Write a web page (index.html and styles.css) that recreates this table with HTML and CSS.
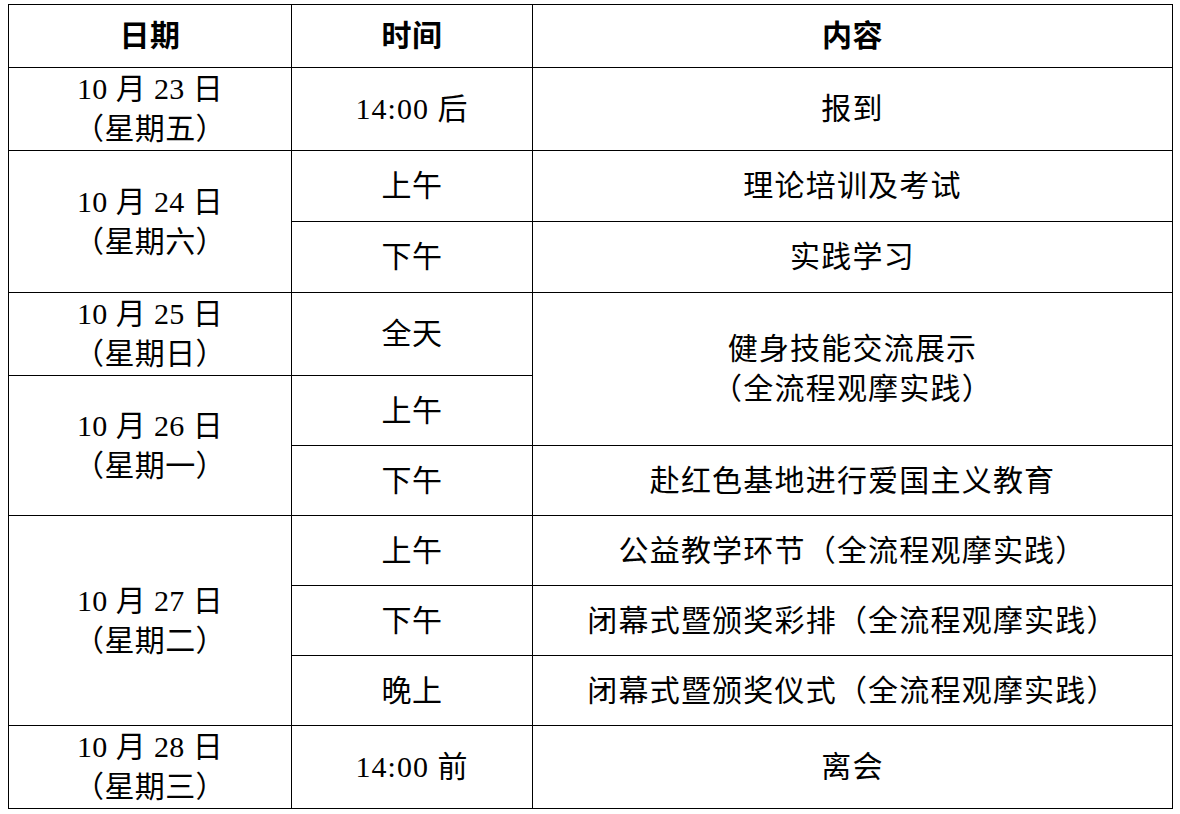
FILE: index.html
```html
<!DOCTYPE html>
<html lang="zh">
<head>
<meta charset="utf-8">
<link rel="stylesheet" href="styles.css">
</head>
<body>
<table class="schedule">
  <colgroup>
    <col class="c-date">
    <col class="c-time">
    <col class="c-content">
  </colgroup>
  <thead>
    <tr class="r-head">
      <th>日期</th>
      <th>时间</th>
      <th>内容</th>
    </tr>
  </thead>
  <tbody>
    <tr class="r-tall">
      <td>10 月 23 日<br><span class="wk">（星期五）</span></td>
      <td class="time">14:00 后</td>
      <td class="content">报到</td>
    </tr>
    <tr class="r-71">
      <td rowspan="2">10 月 24 日<br><span class="wk">（星期六）</span></td>
      <td>上午</td>
      <td class="content">理论培训及考试</td>
    </tr>
    <tr class="r-71">
      <td>下午</td>
      <td class="content">实践学习</td>
    </tr>
    <tr class="r-tall">
      <td>10 月 25 日<br><span class="wk">（星期日）</span></td>
      <td>全天</td>
      <td rowspan="2" class="content">健身技能交流展示<br><span class="wk">（全流程观摩实践）</span></td>
    </tr>
    <tr class="r-70">
      <td rowspan="2">10 月 26 日<br><span class="wk">（星期一）</span></td>
      <td>上午</td>
    </tr>
    <tr class="r-70">
      <td>下午</td>
      <td class="content">赴红色基地进行爱国主义教育</td>
    </tr>
    <tr class="r-70">
      <td rowspan="3">10 月 27 日<br><span class="wk">（星期二）</span></td>
      <td>上午</td>
      <td class="content">公益教学环节（全流程观摩实践）</td>
    </tr>
    <tr class="r-70">
      <td>下午</td>
      <td class="content">闭幕式暨颁奖彩排（全流程观摩实践）</td>
    </tr>
    <tr class="r-70">
      <td>晚上</td>
      <td class="content">闭幕式暨颁奖仪式（全流程观摩实践）</td>
    </tr>
    <tr class="r-tall">
      <td>10 月 28 日<br><span class="wk">（星期三）</span></td>
      <td class="time">14:00 前</td>
      <td class="content">离会</td>
    </tr>
  </tbody>
</table>
</body>
</html>
```

FILE: styles.css
```css
html, body {
  margin: 0;
  padding: 0;
  background: #ffffff;
}

body {
  padding: 4px 0 0 8px;
}

.schedule {
  border-collapse: collapse;
  table-layout: fixed;
  width: 1164px;
  font-family: "Liberation Serif", "Noto Sans CJK SC", serif;
  font-size: 30px;
  line-height: 40px;
  color: #000000;
  letter-spacing: 0.4px;
  text-spacing-trim: space-all;
}

.c-date { width: 283px; }
.c-time { width: 241px; }
.c-content { width: 640px; }

.schedule th,
.schedule td {
  border: 1.5px solid #000000;
  text-align: center;
  vertical-align: middle;
  padding: 0;
  font-weight: normal;
}

.schedule th {
  font-weight: bold;
}

.schedule .content {
  letter-spacing: 1.2px;
}

.schedule .time {
  letter-spacing: 1px;
}

.wk {
  display: inline-block;
  padding: 0 6px;
}

.r-head { height: 63px; }
.r-tall { height: 83px; }
.r-71 { height: 71px; }
.r-70 { height: 70px; }
```
